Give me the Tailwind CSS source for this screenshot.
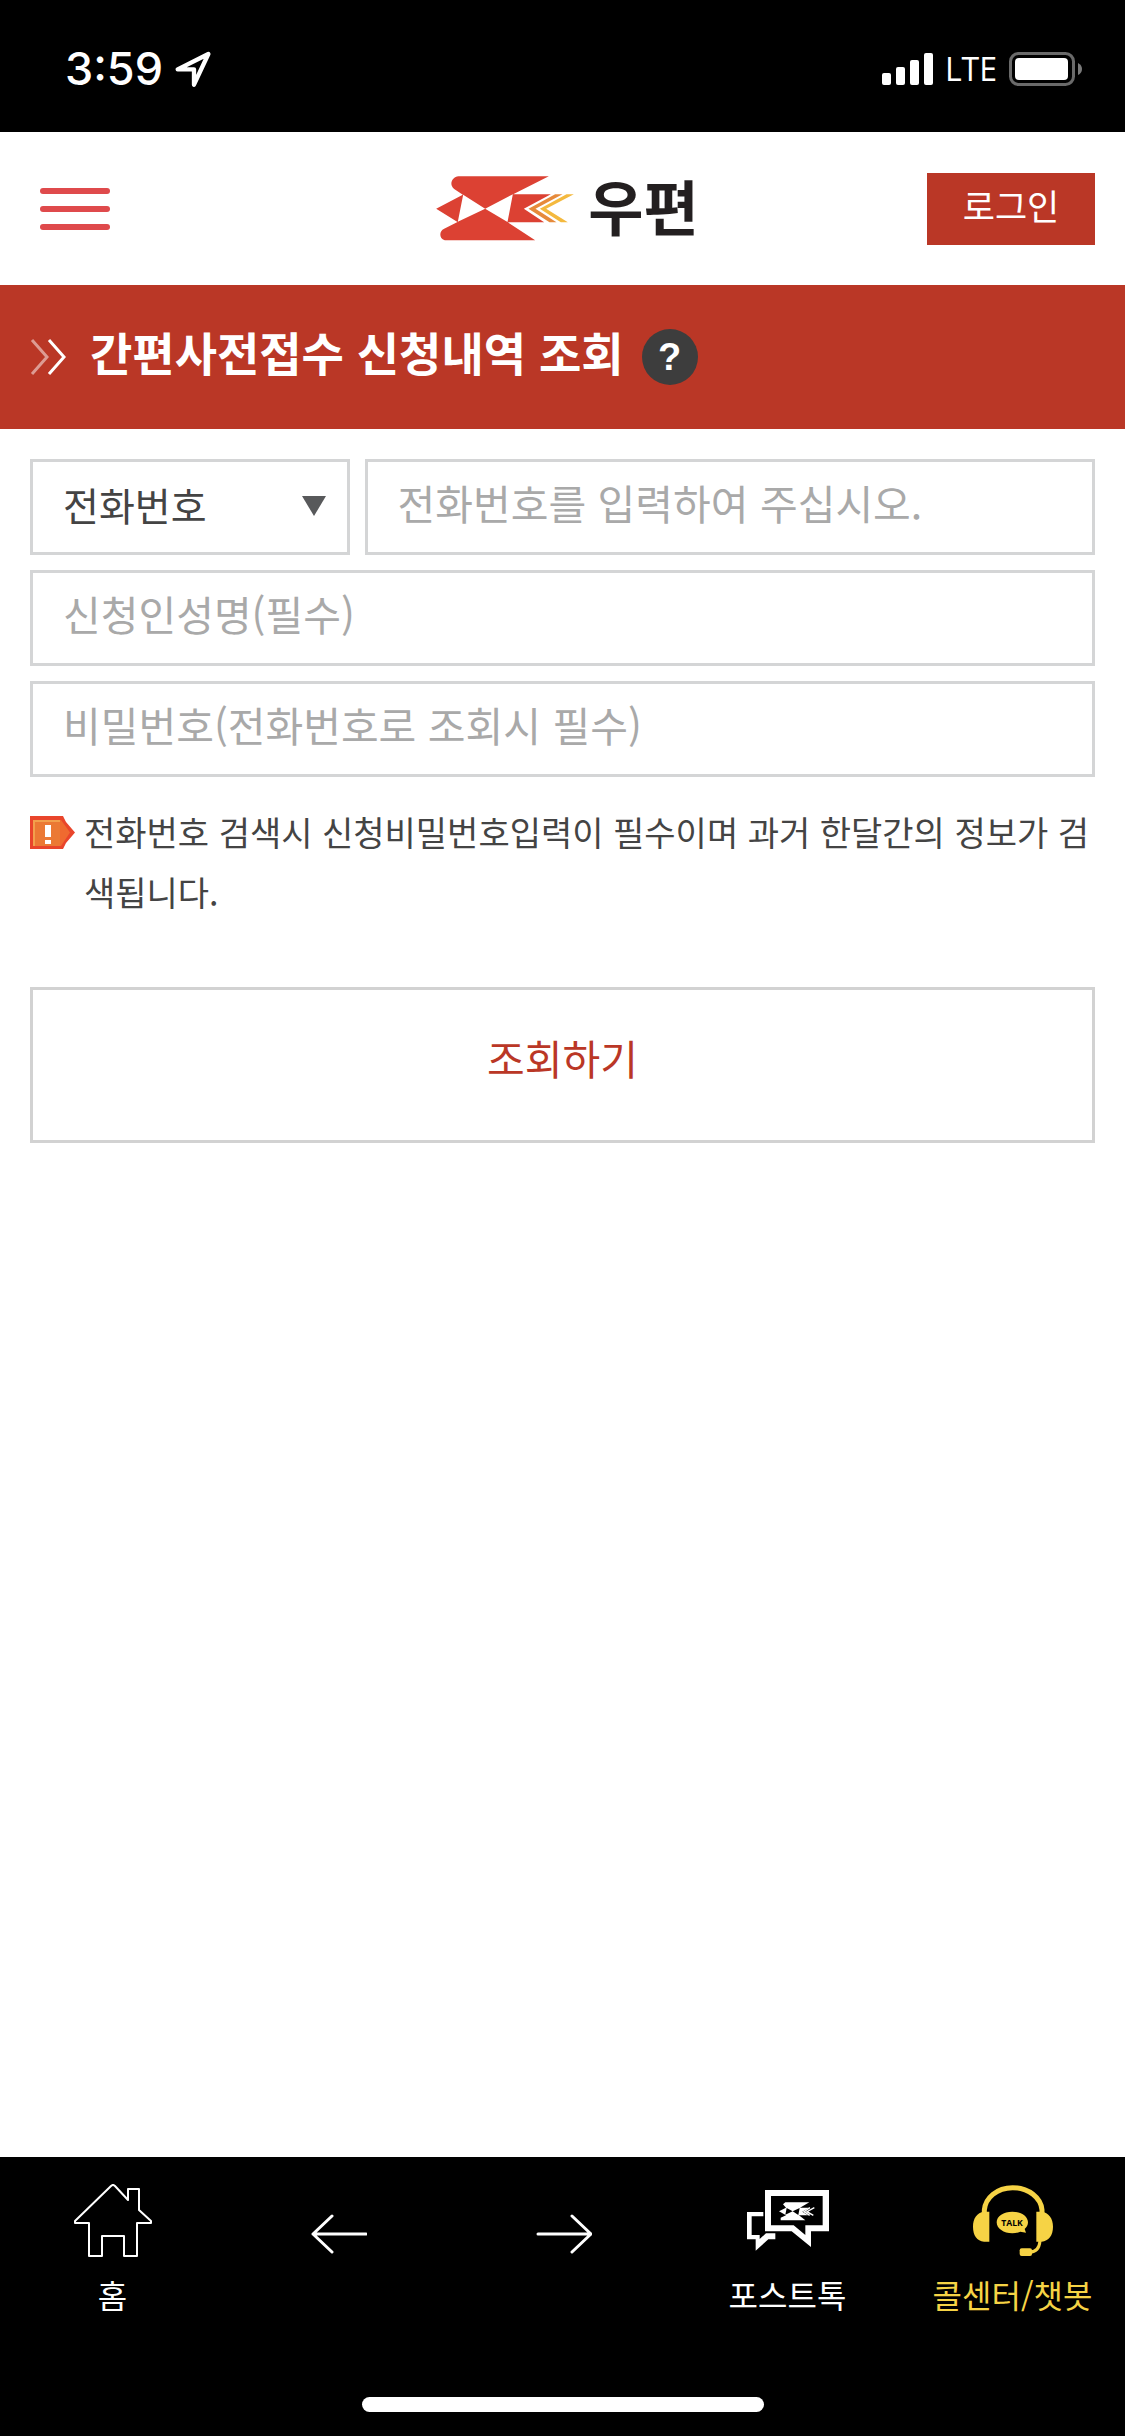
<!DOCTYPE html>
<html lang="ko">
<head>
<meta charset="utf-8">
<meta name="viewport" content="width=device-width, initial-scale=1">
<title>간편사전접수 신청내역 조회</title>
<script src="https://cdn.jsdelivr.net/npm/@tailwindcss/browser@4"></script>
</head>
<body class="flex min-h-screen flex-col bg-white font-['Noto_Sans_CJK_KR',sans-serif] text-[#444]">

<!-- Status bar -->
<div class="flex h-[132px] items-center justify-between bg-black pt-1.5 pr-[43px] pl-[65px] text-white">
  <div class="flex items-center gap-3">
    <span class="font-[Inter,sans-serif] text-[45px] leading-[48px] font-medium">3:59</span>
    <svg class="h-9 w-9" viewBox="526 154 108 108" fill="none" stroke="#fff" stroke-width="13" stroke-linejoin="round" aria-hidden="true"><path d="M626 163 583 255V209H534Z"/></svg>
  </div>
  <div class="flex items-center">
    <svg class="h-8 w-[51px]" viewBox="0 0 51 32" fill="#fff" aria-hidden="true"><rect y="20" width="9" height="12" rx="2"/><rect x="14" y="14" width="9" height="18" rx="2"/><rect x="28" y="7" width="9" height="25" rx="2"/><rect x="42" width="9" height="32" rx="2"/></svg>
    <span class="ml-3 font-['Open_Sans',sans-serif] text-[32px] leading-9 font-medium">LTE</span>
    <svg class="ml-3 h-[34px] w-[73px]" viewBox="0 0 73 34" aria-hidden="true"><rect x="1.5" y="1.5" width="63" height="31" rx="8" fill="none" stroke="#6a6a6a" stroke-width="3"/><rect x="6" y="6" width="53" height="22" rx="4" fill="#fff"/><path d="M69 11q4 2 4 6t-4 6z" fill="#7a7a7a"/></svg>
  </div>
</div>

<!-- Header -->
<header class="grid h-[153px] grid-cols-[1fr_auto_1fr] items-center pr-[30px] pl-10">
  <button type="button" aria-label="메뉴" class="flex w-[70px] flex-col gap-3">
    <span class="h-1.5 w-full rounded-full bg-[#df4a4c]"></span>
    <span class="h-1.5 w-full rounded-full bg-[#df4a4c]"></span>
    <span class="h-1.5 w-full rounded-full bg-[#df4a4c]"></span>
  </button>
  <a href="#" class="flex items-center gap-3.5">
    <svg class="h-[65px] w-[138px]" viewBox="106 108 413 195" aria-hidden="true">
      <path fill="#dc4133" d="M173 109H444L337 163H450L369 206 430 247H321L403 301H136C116 301 112 274 130 266L170 246 106 206 186 164 160 147C143 133 154 111 173 109ZM187 164 171 245 253 206ZM336 163 253 206 320 246Z" fill-rule="evenodd"/>
      <path fill="#e68a3b" d="M463 163H485L404 206 467 247H446L383 206Z"/>
      <path fill="#f4b93e" d="M497 163H519L436 206 501 247H480L417 206Z"/>
    </svg>
    <span class="pb-2 text-[60px] leading-[64px] font-bold text-[#231f20]">우편</span>
  </a>
  <button type="button" class="h-[72px] w-[168px] justify-self-end bg-[#ba3726] pb-2 text-[35px] leading-[48px] text-white">로그인</button>
</header>

<!-- Page title -->
<div class="flex h-36 items-center bg-[#ba3726] px-[30px] text-white">
  <svg class="h-9 w-9" viewBox="0 0 36 36" fill="none" stroke="#fff" stroke-width="3" aria-hidden="true"><path d="M2 1 17 18 2 35" opacity=".5"/><path d="M19 1 34 18 19 35"/></svg>
  <h1 class="ml-6 pb-3 text-[46px] leading-[56px] font-bold">간편사전접수 신청내역 조회</h1>
  <button type="button" aria-label="도움말" class="ml-[18px] h-14 w-14 rounded-full bg-[#3d3d3d] font-['Liberation_Sans',sans-serif] text-[38px] leading-[56px] font-bold">?</button>
</div>

<main class="flex-1 px-[30px] pt-[30px]">
  <form class="flex flex-col gap-[15px]">
    <div class="flex gap-[15px]">
      <div class="relative w-[30%]">
        <select aria-label="조회 구분" class="h-24 w-full appearance-none rounded-none border-[3px] border-[#d4d5d6] bg-white px-[30px] pb-1.5 text-[39px]"><option>전화번호</option></select>
        <svg class="pointer-events-none absolute top-[37px] right-6 h-5 w-6" viewBox="0 0 24 20" fill="#58595b" aria-hidden="true"><path d="M0 0H24L12 20Z"/></svg>
      </div>
      <input type="tel" aria-label="전화번호" placeholder="전화번호를 입력하여 주십시오." class="h-24 min-w-0 flex-1 rounded-none border-[3px] border-[#d4d5d6] px-[30px] pb-2.5 text-[41px] placeholder:text-[#a9a9a9]">
    </div>
    <input type="text" aria-label="신청인성명" placeholder="신청인성명(필수)" class="h-24 w-full rounded-none border-[3px] border-[#d4d5d6] px-[30px] pb-2.5 text-[41px] placeholder:text-[#a9a9a9]">
    <input type="password" aria-label="비밀번호" placeholder="비밀번호(전화번호로 조회시 필수)" class="h-24 w-full rounded-none border-[3px] border-[#d4d5d6] px-[30px] pb-2.5 text-[41px] placeholder:text-[#a9a9a9]">

    <div class="mt-2.5 flex gap-[9px]">
      <svg class="mt-3.5 h-[33px] w-[45px] shrink-0" viewBox="0 0 45 33" aria-hidden="true"><path d="M0 0H33L36 6 45 16.500 36 27 33 33H0Z" fill="#e9452b"/><path d="M3 4H31L40 16.500 31 30H3Z" fill="#ef6a30"/><path d="M3 4H30V30H3Z" fill="#eb7934"/><path d="M3 4H30V6H5V30H3Z" fill="#f2a04c"/><path d="M15 9H21V21H15ZM15 24H21V28H15Z" fill="#fff"/></svg>
      <p class="text-[34px] leading-[60px]">전화번호 검색시 신청비밀번호입력이 필수이며 과거 한달간의 정보가 검색됩니다.</p>
    </div>

    <button type="submit" class="mt-[50px] h-[156px] w-full border-[3px] border-[#d2d2d2] pb-3.5 text-[41px] text-[#ba3726]">조회하기</button>
  </form>
</main>

<!-- Bottom navigation -->
<footer class="bg-black text-white">
  <nav class="grid h-60 grid-cols-5 text-[32px] leading-10 whitespace-nowrap">
    <a href="#" class="flex flex-col items-center pt-[27px]">
      <svg class="h-[74px] w-[78px]" viewBox="74 2184 78 74" fill="none" stroke="#fff" stroke-width="2" stroke-linejoin="round" aria-hidden="true"><path d="M111 2186Q113 2184 115 2186L128 2200V2189H139V2210L151 2221V2223H137V2256H124V2236H102V2256H89V2223H75V2221Z"/></svg>
      <span class="mt-4">홈</span>
    </a>
    <a href="#" aria-label="이전" class="flex justify-center pt-[55px]">
      <svg class="h-11 w-[58px]" viewBox="-2 0 58 44" fill="none" stroke="#fff" stroke-width="3" stroke-linecap="round" stroke-linejoin="round" aria-hidden="true"><path d="M55 22H2M21 4 2 22 21 40"/></svg>
    </a>
    <a href="#" aria-label="다음" class="flex justify-center pt-[55px]">
      <svg class="h-11 w-[58px]" viewBox="-2 0 58 44" fill="none" stroke="#fff" stroke-width="3" stroke-linecap="round" stroke-linejoin="round" aria-hidden="true"><path d="M2 22H55M36 4 55 22 36 40"/></svg>
    </a>
    <a href="#" class="flex flex-col items-center pt-[27px]">
      <svg class="h-[74px] w-[82px]" viewBox="141 132 246 222" fill="#fff" aria-hidden="true">
        <path fill-rule="evenodd" d="M195 150H387V274H333V321L275 274H195ZM213 168V256H281L316 285V256H368V168Z"/>
        <path d="M190 216H141V298H167V332L205 298H226V280H198L179 297V285H155V229H190Z"/>
        <path fill-rule="evenodd" d="M256 187H328L300 203H328L307 215 324 226H297L316 241H242V233L258 226 237 214 258 203 249 193ZM260 204 256 224 278 214ZM299 204 278 214 295 225Z"/>
        <path d="M330 203 312 215 329 226M343 203 321 215 340 226" fill="none" stroke="#fff" stroke-width="4"/>
      </svg>
      <span class="mt-4">포스트톡</span>
    </a>
    <a href="#" class="flex flex-col items-center pt-[27px] text-[#f6d345]">
      <svg class="h-[74px] w-20" viewBox="819 132 240 222" fill="#f6d345" aria-hidden="true">
        <path d="M853 220V210C856 174 890 143 938 143S1023 174 1026 210V220" fill="none" stroke="#f6d345" stroke-width="15"/>
        <path d="M868 215V305H852C831 303 819 286 819 260S831 218 852 215ZM1009 215V305H1025C1046 303 1059 286 1059 260S1046 218 1025 215Z"/>
        <path d="M1020 303C1018 323 1008 336 990 336" fill="none" stroke="#f6d345" stroke-width="9"/>
        <rect x="959" y="325" width="37" height="23" rx="6"/>
        <path d="M937 215C963 215 984 228 984 247 984 255 980 262 974 267L978 278 961 275C954 278 946 280 937 280 911 280 890 266 890 247S911 215 937 215Z"/>
        <text x="936" y="257" text-anchor="middle" font-family="Open Sans, sans-serif" font-size="26" font-weight="700" fill="#000">TALK</text>
      </svg>
      <span class="mt-4">콜센터/챗봇</span>
    </a>
  </nav>
  <div class="flex justify-center pb-6"><span class="h-[15px] w-[402px] rounded-full bg-white"></span></div>
</footer>
</body>
</html>
